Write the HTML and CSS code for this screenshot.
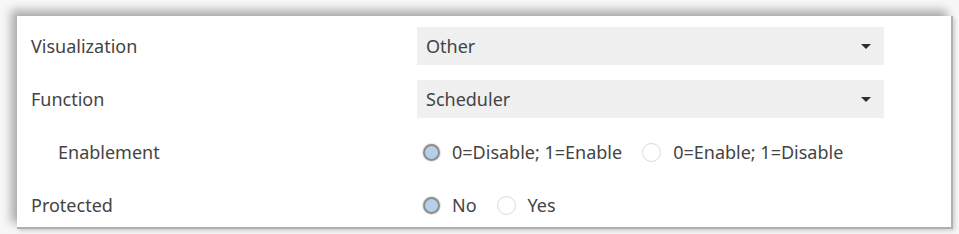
FILE: index.html
```html
<!DOCTYPE html>
<html lang="en">
<head>
    <meta charset="UTF-8">
    <meta name="viewport" content="width=device-width, initial-scale=1.0">
    <title>Parameters</title>
    <link rel="stylesheet" href="styles.css">
</head>
<body>
    <div class="panel">
        <div class="row">
            <span class="label">Visualization</span>
            <div class="select">
                <span>Other</span>
                <span class="arrow"></span>
            </div>
        </div>
        <div class="row">
            <span class="label">Function</span>
            <div class="select">
                <span>Scheduler</span>
                <span class="arrow"></span>
            </div>
        </div>
        <div class="row">
            <span class="label sub">Enablement</span>
            <div class="options">
                <label class="option"><span class="radio checked"></span>0=Disable; 1=Enable</label>
                <label class="option"><span class="radio"></span>0=Enable; 1=Disable</label>
            </div>
        </div>
        <div class="row">
            <span class="label">Protected</span>
            <div class="options">
                <label class="option"><span class="radio checked"></span>No</label>
                <label class="option"><span class="radio"></span>Yes</label>
            </div>
        </div>
    </div>
</body>
</html>
```

FILE: styles.css
```css
*{
    margin: 0;
    padding: 0;
    box-sizing: border-box;
}
body{
    background: #f7f7f7;
    font-family: "Noto Sans", "Open Sans", sans-serif;
    font-size: 18px;
    color: #444;
    padding: 16px 6px 5px 17px;
}
.panel{
    width: 936px;
    height: 213px;
    background: #fff;
    border-right: 2px solid #b0b0b0;
    border-bottom: 2px solid #b0b0b0;
    box-shadow: -6px -6px 9px rgba(0,0,0,0.3), 2px 2px 4px rgba(0,0,0,0.15);
    padding: 11px 0 0 14px;
    display: flex;
    flex-direction: column;
    gap: 15px;
}
.row{
    display: grid;
    grid-template-columns: 386px 467px;
    align-items: center;
    height: 38px;
}
.label.sub{
    padding-left: 27px;
}
.select{
    height: 38px;
    background: #f0f0f0;
    display: flex;
    align-items: center;
    justify-content: space-between;
    padding: 0 13px 0 9px;
}
.arrow{
    width: 0;
    height: 0;
    border-left: 5px solid transparent;
    border-right: 5px solid transparent;
    border-top: 5px solid #2e2e2e;
}
.options{
    display: flex;
    align-items: center;
    gap: 20px;
    padding-left: 6px;
}
.option{
    display: flex;
    align-items: center;
    gap: 12px;
}
.radio{
    width: 19px;
    height: 19px;
    border-radius: 50%;
    border: 1px solid #dadada;
    background: #fff;
}
.radio.checked{
    width: 17px;
    height: 17px;
    border: 2px solid #8c8c8c;
    background: #b7cfe8;
    box-shadow: 0 0 0 1px #e6e6e6;
}
```
